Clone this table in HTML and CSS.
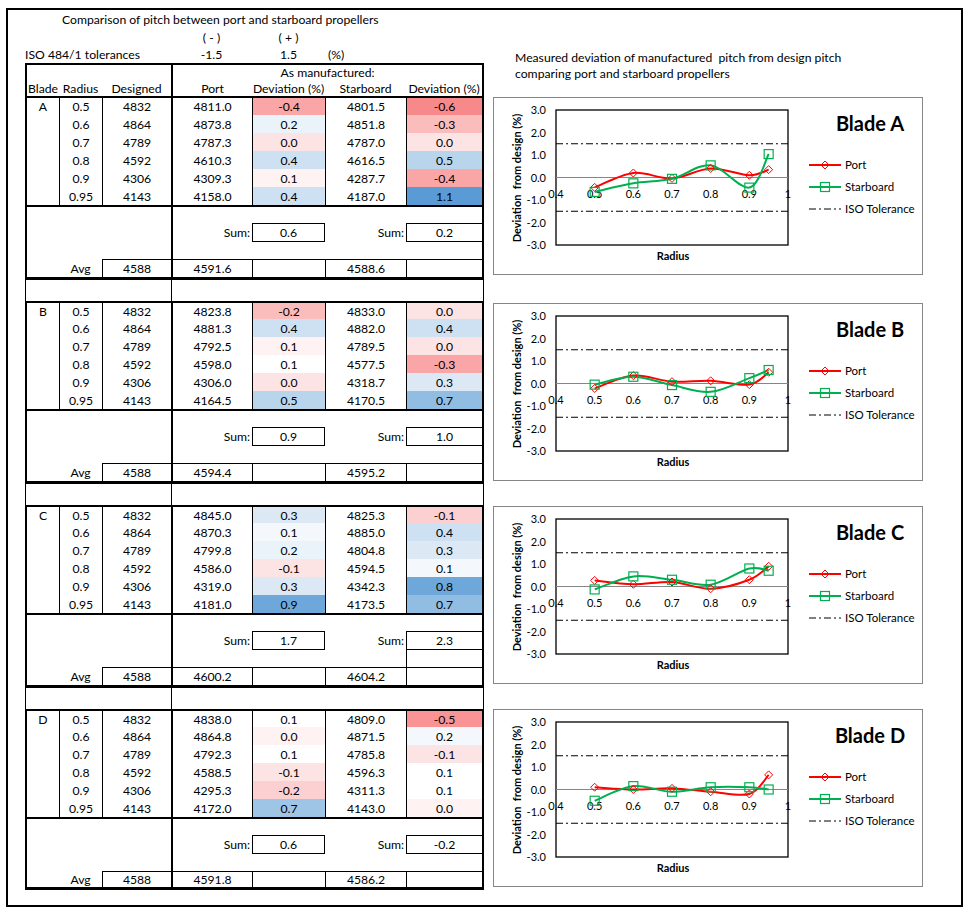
FILE: index.html
```html
<!DOCTYPE html>
<html lang="en">
<head>
    <meta charset="UTF-8">
    <title>Pitch comparison</title>
    <link rel="stylesheet" href="styles.css">
</head>
<body>
    <div class="sheet">
        <!-- 表格區 -->
        <div class="left">
            <div class="intro">
                <span class="ttl">Comparison of pitch between port and starboard propellers</span>
                <span class="sg-minus">( - )</span>
                <span class="sg-plus">( + )</span>
                <span class="iso">ISO 484/1 tolerances</span>
                <span class="tol-minus">-1.5</span>
                <span class="tol-plus">1.5</span>
                <span class="pct">(%)</span>
            </div>

            <table class="pitch">
                <colgroup>
                    <col style="width:34px"><col style="width:43px"><col style="width:69px">
                    <col style="width:81px"><col style="width:73px"><col style="width:81px"><col style="width:78px">
                </colgroup>
                <tr class="h1"><td colspan="3" class="bl2"></td><td colspan="4" class="bl2 br2">As manufactured:</td></tr>
                <tr class="h2"><td class="bl2">Blade</td><td>Radius</td><td>Designed</td><td class="bl2">Port</td><td>Deviation (%)</td><td>Starboard</td><td class="br2">Deviation (%)</td></tr>

                <!-- Blade A -->
                <tr class="first first-a"><td class="bl2">A</td><td class="bl1">0.5</td><td class="bl1">4832</td><td class="bl2">4811.0</td><td class="bl1 r4">-0.4</td><td class="bl1">4801.5</td><td class="bl1 br2 r6">-0.6</td></tr>
                <tr><td class="bl2"></td><td class="bl1">0.6</td><td class="bl1">4864</td><td class="bl2">4873.8</td><td class="bl1 b1">0.2</td><td class="bl1">4851.8</td><td class="bl1 br2 r3">-0.3</td></tr>
                <tr><td class="bl2"></td><td class="bl1">0.7</td><td class="bl1">4789</td><td class="bl2">4787.3</td><td class="bl1 r1">0.0</td><td class="bl1">4787.0</td><td class="bl1 br2 r1">0.0</td></tr>
                <tr><td class="bl2"></td><td class="bl1">0.8</td><td class="bl1">4592</td><td class="bl2">4610.3</td><td class="bl1 b3">0.4</td><td class="bl1">4616.5</td><td class="bl1 br2 b4">0.5</td></tr>
                <tr><td class="bl2"></td><td class="bl1">0.9</td><td class="bl1">4306</td><td class="bl2">4309.3</td><td class="bl1 r0">0.1</td><td class="bl1">4287.7</td><td class="bl1 br2 r4">-0.4</td></tr>
                <tr><td class="bl2"></td><td class="bl1">0.95</td><td class="bl1">4143</td><td class="bl2">4158.0</td><td class="bl1 b3">0.4</td><td class="bl1">4187.0</td><td class="bl1 br2 b8">1.1</td></tr>
                <tr class="sum-top"><td colspan="3" rowspan="3" class="bl2"></td><td colspan="4" class="bl2 br2"></td></tr>
                <tr class="sum-row"><td class="bl2 lbl">Sum:</td><td class="box">0.6</td><td class="lbl">Sum:</td><td class="box box-end">0.2</td></tr>
                <tr class="sum-pad"><td colspan="4" class="bl2 br2"></td></tr>
                <tr class="avg"><td class="bl2"></td><td>Avg</td><td class="bl1 bt1">4588</td><td class="bl2 bt1">4591.6</td><td class="bl1 bt1"></td><td class="bl1 bt1">4588.6</td><td class="bl1 bt1 br2"></td></tr>
                <tr class="gap"><td colspan="3" class="bl1"></td><td colspan="4" class="bl1 br1"></td></tr>

                <!-- Blade B -->
                <tr class="first"><td class="bl2">B</td><td class="bl1">0.5</td><td class="bl1">4832</td><td class="bl2">4823.8</td><td class="bl1 r3">-0.2</td><td class="bl1">4833.0</td><td class="bl1 br2 r1">0.0</td></tr>
                <tr><td class="bl2"></td><td class="bl1">0.6</td><td class="bl1">4864</td><td class="bl2">4881.3</td><td class="bl1 b3">0.4</td><td class="bl1">4882.0</td><td class="bl1 br2 b3">0.4</td></tr>
                <tr><td class="bl2"></td><td class="bl1">0.7</td><td class="bl1">4789</td><td class="bl2">4792.5</td><td class="bl1 r0">0.1</td><td class="bl1">4789.5</td><td class="bl1 br2 r1">0.0</td></tr>
                <tr><td class="bl2"></td><td class="bl1">0.8</td><td class="bl1">4592</td><td class="bl2">4598.0</td><td class="bl1">0.1</td><td class="bl1">4577.5</td><td class="bl1 br2 r4">-0.3</td></tr>
                <tr><td class="bl2"></td><td class="bl1">0.9</td><td class="bl1">4306</td><td class="bl2">4306.0</td><td class="bl1 r1">0.0</td><td class="bl1">4318.7</td><td class="bl1 br2 b2">0.3</td></tr>
                <tr><td class="bl2"></td><td class="bl1">0.95</td><td class="bl1">4143</td><td class="bl2">4164.5</td><td class="bl1 b4">0.5</td><td class="bl1">4170.5</td><td class="bl1 br2 b6">0.7</td></tr>
                <tr class="sum-top"><td colspan="3" rowspan="3" class="bl2"></td><td colspan="4" class="bl2 br2"></td></tr>
                <tr class="sum-row"><td class="bl2 lbl">Sum:</td><td class="box">0.9</td><td class="lbl">Sum:</td><td class="box box-end">1.0</td></tr>
                <tr class="sum-pad"><td colspan="4" class="bl2 br2"></td></tr>
                <tr class="avg"><td class="bl2"></td><td>Avg</td><td class="bl1 bt1">4588</td><td class="bl2 bt1">4594.4</td><td class="bl1 bt1"></td><td class="bl1 bt1">4595.2</td><td class="bl1 bt1 br2"></td></tr>
                <tr class="gap"><td colspan="3" class="bl1"></td><td colspan="4" class="bl1 br1"></td></tr>

                <!-- Blade C -->
                <tr class="first"><td class="bl2">C</td><td class="bl1">0.5</td><td class="bl1">4832</td><td class="bl2">4845.0</td><td class="bl1 b2">0.3</td><td class="bl1">4825.3</td><td class="bl1 br2 r2">-0.1</td></tr>
                <tr><td class="bl2"></td><td class="bl1">0.6</td><td class="bl1">4864</td><td class="bl2">4870.3</td><td class="bl1 b0">0.1</td><td class="bl1">4885.0</td><td class="bl1 br2 b3">0.4</td></tr>
                <tr><td class="bl2"></td><td class="bl1">0.7</td><td class="bl1">4789</td><td class="bl2">4799.8</td><td class="bl1 b1">0.2</td><td class="bl1">4804.8</td><td class="bl1 br2 b2">0.3</td></tr>
                <tr><td class="bl2"></td><td class="bl1">0.8</td><td class="bl1">4592</td><td class="bl2">4586.0</td><td class="bl1 r1">-0.1</td><td class="bl1">4594.5</td><td class="bl1 br2 b0">0.1</td></tr>
                <tr><td class="bl2"></td><td class="bl1">0.9</td><td class="bl1">4306</td><td class="bl2">4319.0</td><td class="bl1 b2">0.3</td><td class="bl1">4342.3</td><td class="bl1 br2 b7">0.8</td></tr>
                <tr><td class="bl2"></td><td class="bl1">0.95</td><td class="bl1">4143</td><td class="bl2">4181.0</td><td class="bl1 b7">0.9</td><td class="bl1">4173.5</td><td class="bl1 br2 b6">0.7</td></tr>
                <tr class="sum-top"><td colspan="3" rowspan="3" class="bl2"></td><td colspan="4" class="bl2 br2"></td></tr>
                <tr class="sum-row"><td class="bl2 lbl">Sum:</td><td class="box">1.7</td><td class="lbl">Sum:</td><td class="box box-end">2.3</td></tr>
                <tr class="sum-pad"><td colspan="3" class="bl2"></td><td class="bl1 br2"></td></tr>
                <tr class="avg"><td class="bl2"></td><td>Avg</td><td class="bl1 bt1">4588</td><td class="bl2 bt1">4600.2</td><td class="bl1 bt1"></td><td class="bl1 bt1">4604.2</td><td class="bl1 bt1 br2"></td></tr>
                <tr class="gap"><td colspan="3" class="bl1"></td><td colspan="4" class="bl1 br1"></td></tr>

                <!-- Blade D -->
                <tr class="first"><td class="bl2">D</td><td class="bl1">0.5</td><td class="bl1">4832</td><td class="bl2">4838.0</td><td class="bl1">0.1</td><td class="bl1">4809.0</td><td class="bl1 br2 r5">-0.5</td></tr>
                <tr><td class="bl2"></td><td class="bl1">0.6</td><td class="bl1">4864</td><td class="bl2">4864.8</td><td class="bl1 r0">0.0</td><td class="bl1">4871.5</td><td class="bl1 br2 b0">0.2</td></tr>
                <tr><td class="bl2"></td><td class="bl1">0.7</td><td class="bl1">4789</td><td class="bl2">4792.3</td><td class="bl1">0.1</td><td class="bl1">4785.8</td><td class="bl1 br2 r1">-0.1</td></tr>
                <tr><td class="bl2"></td><td class="bl1">0.8</td><td class="bl1">4592</td><td class="bl2">4588.5</td><td class="bl1 r1">-0.1</td><td class="bl1">4596.3</td><td class="bl1 br2">0.1</td></tr>
                <tr><td class="bl2"></td><td class="bl1">0.9</td><td class="bl1">4306</td><td class="bl2">4295.3</td><td class="bl1 r2">-0.2</td><td class="bl1">4311.3</td><td class="bl1 br2">0.1</td></tr>
                <tr><td class="bl2"></td><td class="bl1">0.95</td><td class="bl1">4143</td><td class="bl2">4172.0</td><td class="bl1 b5">0.7</td><td class="bl1">4143.0</td><td class="bl1 br2 r0">0.0</td></tr>
                <tr class="sum-top"><td colspan="3" rowspan="3" class="bl2"></td><td colspan="4" class="bl2 br2"></td></tr>
                <tr class="sum-row"><td class="bl2 lbl">Sum:</td><td class="box">0.6</td><td class="lbl">Sum:</td><td class="box box-end">-0.2</td></tr>
                <tr class="sum-pad"><td colspan="4" class="bl2 br2"></td></tr>
                <tr class="avg avg-last"><td class="bl2"></td><td>Avg</td><td class="bl1 bt1">4588</td><td class="bl2 bt1">4591.8</td><td class="bl1 bt1"></td><td class="bl1 bt1">4586.2</td><td class="bl1 bt1 br2"></td></tr>
            </table>
        </div>

        <!-- 圖表區 -->
        <div class="right">
            <p class="chart-title">Measured deviation of manufactured&nbsp; pitch from design pitch<br>comparing port and starboard propellers</p>
            <div class="chart" data-blade="A"></div>
            <div class="chart chart-b" data-blade="B"></div>
            <div class="chart" data-blade="C"></div>
            <div class="chart" data-blade="D"></div>
        </div>
    </div>

    <script src="script.js"></script>
</body>
</html>
```

FILE: styles.css
```css
body {
    margin: 0;
    font-family: Lato, "Liberation Sans", sans-serif;
    font-size: 12.2px;
    color: #000;
    background: #fff;
}

/* 外框 */
.sheet {
    display: flex;
    margin: 8px 0 0 6px;
    width: 953px;
    height: 895px;
    border: 2px solid #000;
}

.left {
    width: 459px;
    padding-left: 17px;
}

/* 標題與公差 */
.intro {
    display: grid;
    grid-template-columns: 34px 43px 69px 81px 73px 81px 78px;
    grid-template-rows: 18px 18px 17px;
    align-items: center;
    white-space: nowrap;
}

.ttl { grid-column: 2 / 8; grid-row: 1; padding-left: 3px; }
.sg-minus { grid-column: 4; grid-row: 2; text-align: center; }
.sg-plus { grid-column: 5; grid-row: 2; text-align: center; }
.iso { grid-column: 1 / 4; grid-row: 3; }
.tol-minus { grid-column: 4; grid-row: 3; text-align: center; }
.tol-plus { grid-column: 5; grid-row: 3; text-align: center; }
.pct { grid-column: 6; grid-row: 3; padding-left: 3px; }

/* 表格 */
.pitch {
    table-layout: fixed;
    width: 459px;
    border-collapse: separate;
    border-spacing: 0;
}

.pitch td {
    padding: 0;
    text-align: center;
    vertical-align: middle;
    white-space: nowrap;
    box-sizing: border-box;
}

.pitch tr { height: 18px; }
.pitch tr.h1 { height: 17px; }
.pitch tr.h1 td { border-top: 2px solid #000; }
.pitch tr.h2 { height: 16px; }
.pitch tr.first td { border-top: 2px solid #000; }
.pitch tr.first-a { height: 19px; }
.pitch tr.sum-top td { border-top: 2px solid #000; }
.pitch tr.sum-row { height: 19px; }
.pitch tr.sum-pad { height: 17px; }
.pitch tr.gap { height: 24px; }
.pitch tr.gap td { border-top: 3px solid #000; }
.pitch tr.avg-last { height: 19px; }
.pitch tr.avg-last td { border-bottom: 3px solid #000; }

.bl1 { border-left: 1px solid #000; }
.bl2 { border-left: 2px solid #000; }
.br1 { border-right: 1px solid #000; }
.br2 { border-right: 2px solid #000; }
.bt1 { border-top: 1px solid #000; }

.pitch td.lbl {
    text-align: right;
    padding-right: 2px;
}

.pitch td.box {
    border: 1px solid #000;
}

.pitch td.box-end {
    border-right-width: 2px;
}

/* 色階 */
.r6 { background: #f8898a; }
.r5 { background: #f99394; }
.r4 { background: #faa6a7; }
.r3 { background: #fbbcbc; }
.r2 { background: #fcd0d0; }
.r1 { background: #fde4e4; }
.r0 { background: #fef2f2; }
.b0 { background: #f4f8fc; }
.b1 { background: #eaf2fa; }
.b2 { background: #dce9f5; }
.b3 { background: #cde1f2; }
.b4 { background: #b8d5ec; }
.b5 { background: #9fc5e6; }
.b6 { background: #92bde2; }
.b7 { background: #6ea8da; }
.b8 { background: #5b9bd5; }

/* 圖表 */
.right {
    margin-left: 9px;
    padding-top: 40px;
}

.chart-title {
    margin: 0 0 15px 22px;
    line-height: 16px;
    white-space: nowrap;
}

.chart {
    width: 428px;
    height: 176px;
    border: 1px solid #868686;
}

.chart + .chart {
    margin-top: 25px;
}

.chart.chart-b {
    margin-top: 28px;
}

.chart svg {
    display: block;
    font-family: Lato, "Liberation Sans", sans-serif;
}

.chart .tick { font-size: 11px; }
.chart .axis-title { font-size: 11px; font-weight: bold; }
.chart .blade-name { font-size: 20px; font-weight: bold; }
.chart .legend { font-size: 11.5px; }
```

FILE: script.js
```js
// 各葉片偏差資料 (%)
const data = {
    A: { port: [-0.44, 0.2, -0.04, 0.4, 0.1, 0.35], stbd: [-0.64, -0.26, -0.06, 0.54, -0.45, 1.04] },
    B: { port: [-0.22, 0.35, 0.08, 0.12, -0.05, 0.5], stbd: [-0.05, 0.3, -0.07, -0.37, 0.24, 0.6] },
    C: { port: [0.27, 0.1, 0.2, -0.1, 0.3, 0.9], stbd: [-0.13, 0.45, 0.3, 0.08, 0.8, 0.7] },
    D: { port: [0.1, 0.0, 0.05, -0.1, -0.2, 0.65], stbd: [-0.5, 0.15, -0.1, 0.1, 0.1, 0.0] }
};
const radius = [0.5, 0.6, 0.7, 0.8, 0.9, 0.95];
const plot = { left: 62, right: 294, top: 12, bottom: 147 };

function sx(v) { return plot.left + (v - 0.4) / 0.6 * (plot.right - plot.left); }
function sy(v) { return plot.top + (3 - v) / 6 * (plot.bottom - plot.top); }

// 平滑曲線
function smoothPath(pts) {
    let d = 'M' + pts[0][0].toFixed(1) + ',' + pts[0][1].toFixed(1);
    for (let i = 0; i < pts.length - 1; i++) {
        const p0 = pts[i - 1] || pts[i];
        const p1 = pts[i];
        const p2 = pts[i + 1];
        const p3 = pts[i + 2] || p2;
        const c1 = [p1[0] + (p2[0] - p0[0]) / 6, p1[1] + (p2[1] - p0[1]) / 6];
        const c2 = [p2[0] - (p3[0] - p1[0]) / 6, p2[1] - (p3[1] - p1[1]) / 6];
        d += ' C' + c1[0].toFixed(1) + ',' + c1[1].toFixed(1) + ' ' + c2[0].toFixed(1) + ',' + c2[1].toFixed(1) + ' ' + p2[0].toFixed(1) + ',' + p2[1].toFixed(1);
    }
    return d;
}

function diamond(x, y) {
    return '<path d="M' + x + ',' + (y - 4) + ' L' + (x + 4) + ',' + y + ' L' + x + ',' + (y + 4) + ' L' + (x - 4) + ',' + y + ' Z" fill="none" stroke="#ff0000" stroke-width="1"/>';
}

function square(x, y) {
    return '<rect x="' + (x - 4.5) + '" y="' + (y - 4.5) + '" width="9" height="9" fill="none" stroke="#00b050" stroke-width="1.2"/>';
}

function buildChart(el) {
    const blade = el.dataset.blade;
    const d = data[blade];
    let s = '<svg width="428" height="176" viewBox="0 0 428 176">';
    s += '<rect x="' + plot.left + '" y="' + plot.top + '" width="' + (plot.right - plot.left) + '" height="' + (plot.bottom - plot.top) + '" fill="#fff" stroke="#000" stroke-width="1.3"/>';
    s += '<line x1="' + plot.left + '" x2="' + plot.right + '" y1="' + sy(0) + '" y2="' + sy(0) + '" stroke="#868686" stroke-width="1"/>';
    [1.5, -1.5].forEach(function (v) {
        s += '<line x1="' + plot.left + '" x2="' + plot.right + '" y1="' + sy(v) + '" y2="' + sy(v) + '" stroke="#000" stroke-width="1" stroke-dasharray="7 3 2 3"/>';
    });

    // 軸標籤
    for (let v = 3; v >= -3; v--) {
        s += '<text class="tick" x="52" y="' + (sy(v) + 4) + '" text-anchor="end">' + v.toFixed(1) + '</text>';
    }
    ['0.4', '0.5', '0.6', '0.7', '0.8', '0.9', '1'].forEach(function (t) {
        s += '<text class="tick" x="' + sx(parseFloat(t)) + '" y="' + (sy(0) + 20) + '" text-anchor="middle">' + t + '</text>';
    });

    // 曲線與標記
    const portPts = radius.map(function (r, i) { return [sx(r), sy(d.port[i])]; });
    const stbdPts = radius.map(function (r, i) { return [sx(r), sy(d.stbd[i])]; });
    s += '<path d="' + smoothPath(portPts) + '" fill="none" stroke="#ff0000" stroke-width="2"/>';
    s += '<path d="' + smoothPath(stbdPts) + '" fill="none" stroke="#00b050" stroke-width="2"/>';
    portPts.forEach(function (p) { s += diamond(p[0], p[1]); });
    stbdPts.forEach(function (p) { s += square(p[0], p[1]); });

    s += '<text class="axis-title" transform="translate(27 80) rotate(-90)" text-anchor="middle">Deviation&nbsp; from design (%)</text>';
    s += '<text class="axis-title" x="179" y="162" text-anchor="middle">Radius</text>';
    s += '<text class="blade-name" x="376" y="33" text-anchor="middle">Blade ' + blade + '</text>';

    // 圖例
    s += '<line x1="315" x2="347" y1="67" y2="67" stroke="#ff0000" stroke-width="2"/>' + diamond(331, 67);
    s += '<text class="legend" x="351" y="71">Port</text>';
    s += '<line x1="315" x2="347" y1="89" y2="89" stroke="#00b050" stroke-width="2"/>' + square(331, 89);
    s += '<text class="legend" x="351" y="93">Starboard</text>';
    s += '<line x1="315" x2="347" y1="111" y2="111" stroke="#000" stroke-width="1" stroke-dasharray="7 3 2 3"/>';
    s += '<text class="legend" x="351" y="115">ISO Tolerance</text>';
    s += '</svg>';
    el.innerHTML = s;
}

document.querySelectorAll('.chart').forEach(buildChart);
```
